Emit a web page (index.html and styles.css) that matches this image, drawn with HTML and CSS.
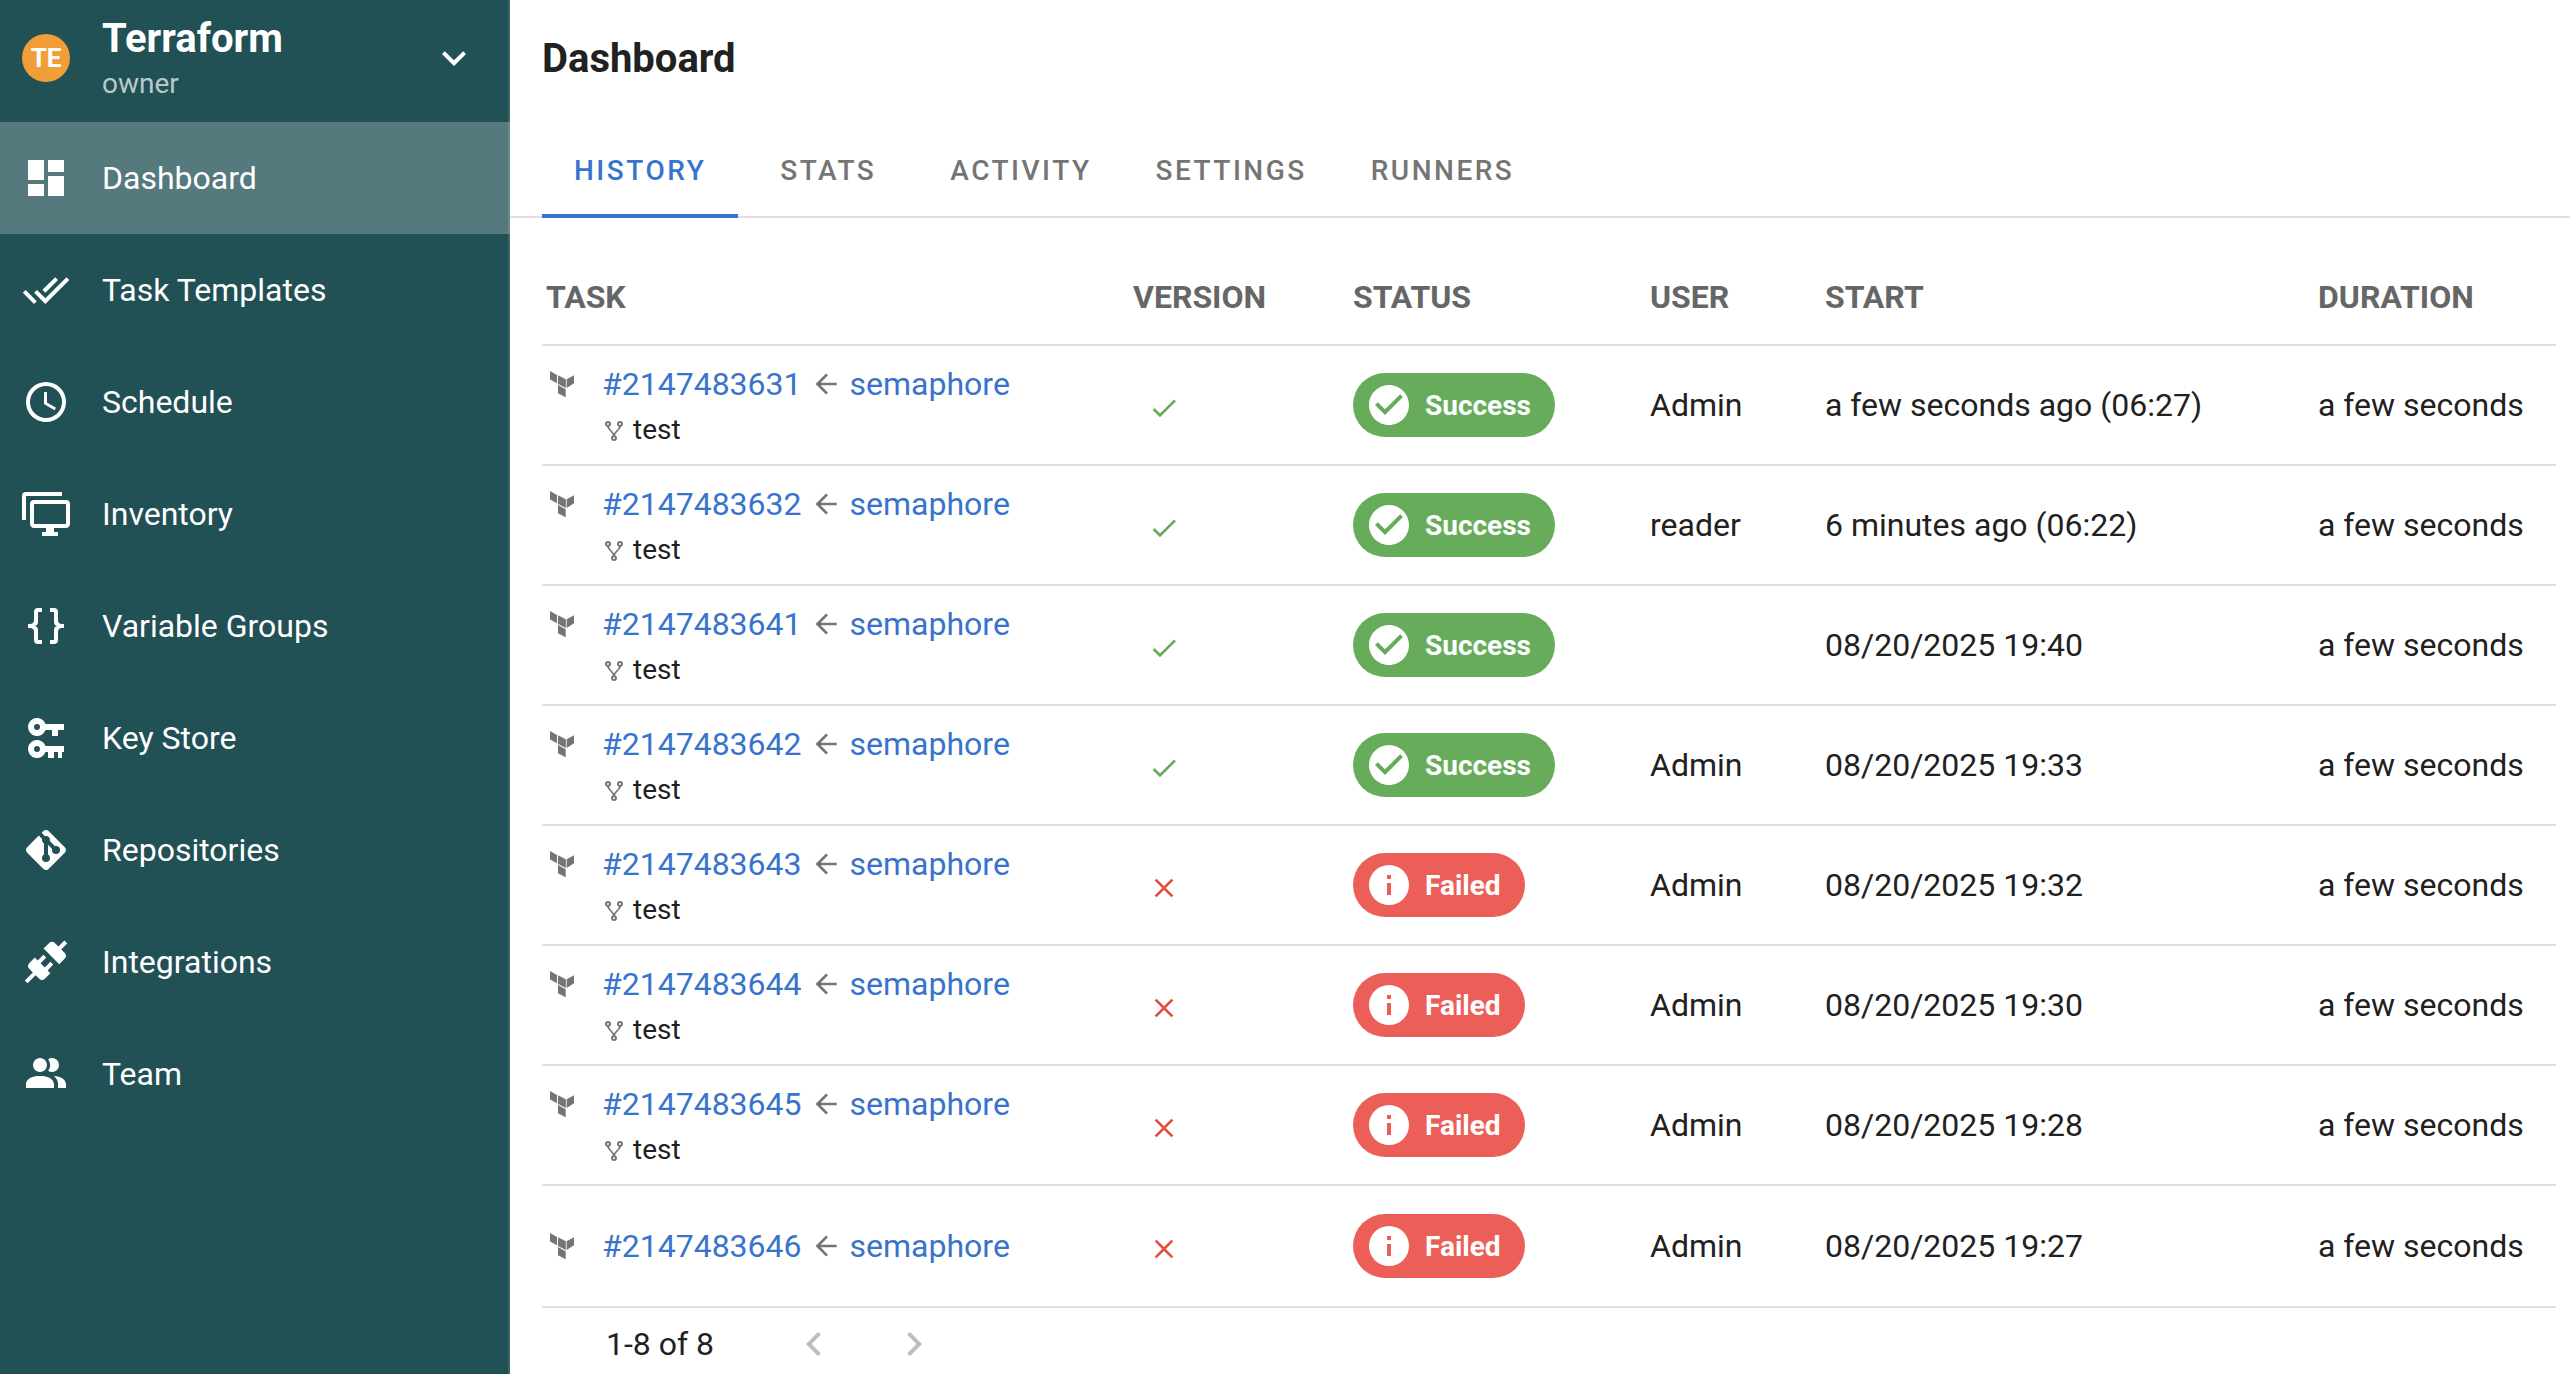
FILE: index.html
```html
<!DOCTYPE html>
<html lang="en">
<head>
<meta charset="utf-8">
<title>Dashboard</title>
<link rel="stylesheet" href="styles.css">
</head>
<body>
<svg class="sprite" width="0" height="0" aria-hidden="true">
  <symbol id="terraform" viewBox="0 0 96 96"><path d="M12,9L33,21V46L12,34.500ZM36,22L59.500,34V60L36,48ZM62,34L84,21.500V46L62,60ZM36,51L59,63.500V87.500L36,76Z"/></symbol>
  <symbol id="arrow-left" viewBox="0 0 24 24"><path d="M20,11V13H8L13.500,18.500L12.080,19.920L4.160,12L12.080,4.080L13.500,5.500L8,11H20Z"/></symbol>
  <symbol id="fork" viewBox="0 0 24 24"><path d="M6,2A3,3 0 0,1 9,5C9,6.280 8.190,7.380 7.060,7.810C7.150,8.270 7.390,8.830 8,9.630C9,10.920 11,12.830 12,14.170C13,12.830 15,10.920 16,9.630C16.610,8.830 16.850,8.270 16.940,7.810C15.810,7.380 15,6.280 15,5A3,3 0 0,1 18,2A3,3 0 0,1 21,5C21,6.320 20.140,7.450 18.950,7.850C18.870,8.370 18.640,9 18,9.830C17,11.170 15,13.080 14,14.380C13.390,15.170 13.150,15.730 13.060,16.190C14.190,16.620 15,17.720 15,19A3,3 0 0,1 12,22A3,3 0 0,1 9,19C9,17.720 9.810,16.620 10.940,16.190C10.850,15.730 10.610,15.170 10,14.380C9,13.080 7,11.170 6,9.830C5.360,9 5.130,8.370 5.050,7.850C3.860,7.450 3,6.320 3,5A3,3 0 0,1 6,2M6,4A1,1 0 0,0 5,5A1,1 0 0,0 6,6A1,1 0 0,0 7,5A1,1 0 0,0 6,4M18,4A1,1 0 0,0 17,5A1,1 0 0,0 18,6A1,1 0 0,0 19,5A1,1 0 0,0 18,4M12,18A1,1 0 0,0 11,19A1,1 0 0,0 12,20A1,1 0 0,0 13,19A1,1 0 0,0 12,18Z"/></symbol>
  <symbol id="check" viewBox="0 0 24 24"><path d="M21,7L9,19L3.500,13.500L4.910,12.090L9,16.170L19.590,5.590L21,7Z"/></symbol>
  <symbol id="close" viewBox="0 0 24 24"><path d="M19,6.410L17.590,5L12,10.590L6.410,5L5,6.410L10.590,12L5,17.590L6.410,19L12,13.410L17.590,19L19,17.590L13.410,12L19,6.410Z"/></symbol>
  <symbol id="check-circle" viewBox="0 0 24 24"><path d="M12,2C6.500,2 2,6.500 2,12S6.500,22 12,22 22,17.500 22,12 17.500,2 12,2M10,17L5,12L6.410,10.590L10,14.170L17.590,6.580L19,8L10,17Z"/></symbol>
  <symbol id="information" viewBox="0 0 24 24"><path d="M13,9H11V7H13M13,17H11V11H13M12,2A10,10 0 0,0 2,12A10,10 0 0,0 12,22A10,10 0 0,0 22,12A10,10 0 0,0 12,2Z"/></symbol>
</svg>
<div class="app">
  <aside class="sidebar">
    <button class="project">
      <span class="avatar">TE</span>
      <span class="project-text">
        <span class="project-name">Terraform</span>
        <span class="project-role">owner</span>
      </span>
      <svg class="icon" viewBox="0 0 24 24"><path d="M7.410,8.580L12,13.170L16.590,8.580L18,10L12,16L6,10L7.410,8.580Z"/></svg>
    </button>
    <nav class="nav">
      <a class="nav-item active"><svg class="icon" viewBox="0 0 24 24"><path d="M13,3V9H21V3M13,21H21V11H13M3,21H11V15H3M3,13H11V3H3V13Z"/></svg>Dashboard</a>
      <a class="nav-item"><svg class="icon" viewBox="0 0 24 24"><path d="M0.410,13.410L6,19L7.410,17.580L1.830,12M22.240,5.580L11.660,16.170L7.500,12L6.070,13.410L11.660,19L23.660,7M18,7L16.590,5.580L10.240,11.930L11.660,13.340L18,7Z"/></svg>Task Templates</a>
      <a class="nav-item"><svg class="icon" viewBox="0 0 24 24"><path d="M12,20A8,8 0 0,0 20,12A8,8 0 0,0 12,4A8,8 0 0,0 4,12A8,8 0 0,0 12,20M12,2A10,10 0 0,1 22,12A10,10 0 0,1 12,22C6.470,22 2,17.500 2,12A10,10 0 0,1 12,2M12.500,7V12.250L17,14.920L16.250,16.150L11,13V7H12.500Z"/></svg>Schedule</a>
      <a class="nav-item"><svg class="icon" viewBox="0 0 24 24"><path d="M22,17V7H6V17H22M22,5A2,2 0 0,1 24,7V17C24,18.110 23.100,19 22,19H16V21H18V23H10V21H12V19H6C4.890,19 4,18.110 4,17V7A2,2 0 0,1 6,5H22M2,3V15H0V3A2,2 0 0,1 2,1H20V3H2Z"/></svg>Inventory</a>
      <a class="nav-item"><svg class="icon" viewBox="0 0 24 24"><path d="M8,3A2,2 0 0,0 6,5V9A2,2 0 0,1 4,11H3V13H4A2,2 0 0,1 6,15V19A2,2 0 0,0 8,21H10V19H8V14A2,2 0 0,0 6,12A2,2 0 0,0 8,10V5H10V3M16,3A2,2 0 0,1 18,5V9A2,2 0 0,0 20,11H21V13H20A2,2 0 0,0 18,15V19A2,2 0 0,1 16,21H14V19H16V14A2,2 0 0,1 18,12A2,2 0 0,1 16,10V5H14V3H16Z"/></svg>Variable Groups</a>
      <a class="nav-item"><svg class="icon" viewBox="0 0 24 24"><path fill-rule="evenodd" d="M7.500,2C9.460,2 11.130,3.250 11.740,5H21V8H18V11H15V8H11.740A4.500,4.500 0 1,1 7.500,2M7.500,5A1.500,1.500 0 1,0 7.500,8A1.500,1.500 0 1,0 7.500,5M7.500,13C9.460,13 11.130,14.250 11.740,16H21V19H20V22H18V19H16V22H13V19H11.740A4.500,4.500 0 1,1 7.500,13M7.500,16A1.500,1.500 0 1,0 7.500,19A1.500,1.500 0 1,0 7.500,16Z"/></svg>Key Store</a>
      <a class="nav-item"><svg class="icon" viewBox="0 0 24 24"><path d="M2.600,10.590L8.380,4.800L10.070,6.500C9.830,7.350 10.220,8.280 11,8.730V14.270C10.400,14.610 10,15.260 10,16A2,2 0 0,0 12,18A2,2 0 0,0 14,16C14,15.260 13.600,14.610 13,14.270V9.410L15.070,11.500C15,11.650 15,11.820 15,12A2,2 0 0,0 17,14A2,2 0 0,0 19,12A2,2 0 0,0 17,10C16.820,10 16.650,10 16.500,10.070L13.930,7.500C14.190,6.570 13.710,5.550 12.780,5.160C12.350,5 11.900,4.960 11.500,5.070L9.800,3.380L10.590,2.600C11.370,1.810 12.630,1.810 13.410,2.600L21.400,10.590C22.190,11.370 22.190,12.630 21.400,13.410L13.410,21.400C12.630,22.190 11.370,22.190 10.590,21.400L2.600,13.410C1.810,12.630 1.810,11.370 2.600,10.590Z"/></svg>Repositories</a>
      <a class="nav-item"><svg class="icon" viewBox="0 0 24 24"><path d="M21.400,7.500C22.200,8.300 22.200,9.600 21.400,10.300L18.600,13.100L10.800,5.300L13.600,2.500C14.400,1.700 15.700,1.700 16.400,2.500L18.200,4.300L21.200,1.300L22.600,2.700L19.600,5.700L21.400,7.500M15.600,13.300L14.200,11.900L11.400,14.700L9.300,12.600L12.100,9.800L10.700,8.400L7.900,11.200L6.400,9.800L3.600,12.600C2.800,13.400 2.800,14.700 3.600,15.400L5.400,17.200L1.400,21.200L2.800,22.600L6.800,18.600L8.600,20.400C9.400,21.200 10.700,21.200 11.400,20.400L14.200,17.600L12.800,16.200L15.600,13.300Z"/></svg>Integrations</a>
      <a class="nav-item"><svg class="icon" viewBox="0 0 24 24"><path d="M16,17V19H2V17S2,13 9,13 16,17 16,17M12.500,7.500A3.500,3.500 0 1,0 9,11A3.500,3.500 0 0,0 12.500,7.500M15.940,13A5.320,5.320 0 0,1 18,17V19H22V17S22,13.370 15.940,13M15,4A3.390,3.390 0 0,0 13.070,4.590A5,5 0 0,1 13.070,10.410A3.390,3.390 0 0,0 15,11A3.500,3.500 0 0,0 15,4Z"/></svg>Team</a>
    </nav>
  </aside>

  <main class="main">
    <header class="toolbar"><h1 class="page-title">Dashboard</h1></header>
    <div class="tabs">
      <a class="tab selected">History</a>
      <a class="tab">Stats</a>
      <a class="tab">Activity</a>
      <a class="tab">Settings</a>
      <a class="tab">Runners</a>
    </div>

    <table class="history">
      <colgroup>
        <col class="col-task"><col class="col-version"><col class="col-status"><col class="col-user"><col class="col-start"><col>
      </colgroup>
      <thead>
        <tr><th>Task</th><th>Version</th><th>Status</th><th>User</th><th>Start</th><th>Duration</th></tr>
      </thead>
      <tbody>
        <tr>
          <td><div class="task"><svg class="app-icon"><use href="#terraform"/></svg><div class="task-info"><div class="task-line"><a class="link">#2147483631</a><svg class="arrow"><use href="#arrow-left"/></svg><a class="link">semaphore</a></div><div class="message"><svg class="fork"><use href="#fork"/></svg>test</div></div></div></td>
          <td><svg class="version ok"><use href="#check"/></svg></td>
          <td><span class="chip success"><svg class="icon"><use href="#check-circle"/></svg>Success</span></td>
          <td>Admin</td><td>a few seconds ago (06:27)</td><td>a few seconds</td>
        </tr>
        <tr>
          <td><div class="task"><svg class="app-icon"><use href="#terraform"/></svg><div class="task-info"><div class="task-line"><a class="link">#2147483632</a><svg class="arrow"><use href="#arrow-left"/></svg><a class="link">semaphore</a></div><div class="message"><svg class="fork"><use href="#fork"/></svg>test</div></div></div></td>
          <td><svg class="version ok"><use href="#check"/></svg></td>
          <td><span class="chip success"><svg class="icon"><use href="#check-circle"/></svg>Success</span></td>
          <td>reader</td><td>6 minutes ago (06:22)</td><td>a few seconds</td>
        </tr>
        <tr>
          <td><div class="task"><svg class="app-icon"><use href="#terraform"/></svg><div class="task-info"><div class="task-line"><a class="link">#2147483641</a><svg class="arrow"><use href="#arrow-left"/></svg><a class="link">semaphore</a></div><div class="message"><svg class="fork"><use href="#fork"/></svg>test</div></div></div></td>
          <td><svg class="version ok"><use href="#check"/></svg></td>
          <td><span class="chip success"><svg class="icon"><use href="#check-circle"/></svg>Success</span></td>
          <td></td><td>08/20/2025 19:40</td><td>a few seconds</td>
        </tr>
        <tr>
          <td><div class="task"><svg class="app-icon"><use href="#terraform"/></svg><div class="task-info"><div class="task-line"><a class="link">#2147483642</a><svg class="arrow"><use href="#arrow-left"/></svg><a class="link">semaphore</a></div><div class="message"><svg class="fork"><use href="#fork"/></svg>test</div></div></div></td>
          <td><svg class="version ok"><use href="#check"/></svg></td>
          <td><span class="chip success"><svg class="icon"><use href="#check-circle"/></svg>Success</span></td>
          <td>Admin</td><td>08/20/2025 19:33</td><td>a few seconds</td>
        </tr>
        <tr>
          <td><div class="task"><svg class="app-icon"><use href="#terraform"/></svg><div class="task-info"><div class="task-line"><a class="link">#2147483643</a><svg class="arrow"><use href="#arrow-left"/></svg><a class="link">semaphore</a></div><div class="message"><svg class="fork"><use href="#fork"/></svg>test</div></div></div></td>
          <td><svg class="version bad"><use href="#close"/></svg></td>
          <td><span class="chip failed"><svg class="icon"><use href="#information"/></svg>Failed</span></td>
          <td>Admin</td><td>08/20/2025 19:32</td><td>a few seconds</td>
        </tr>
        <tr>
          <td><div class="task"><svg class="app-icon"><use href="#terraform"/></svg><div class="task-info"><div class="task-line"><a class="link">#2147483644</a><svg class="arrow"><use href="#arrow-left"/></svg><a class="link">semaphore</a></div><div class="message"><svg class="fork"><use href="#fork"/></svg>test</div></div></div></td>
          <td><svg class="version bad"><use href="#close"/></svg></td>
          <td><span class="chip failed"><svg class="icon"><use href="#information"/></svg>Failed</span></td>
          <td>Admin</td><td>08/20/2025 19:30</td><td>a few seconds</td>
        </tr>
        <tr>
          <td><div class="task"><svg class="app-icon"><use href="#terraform"/></svg><div class="task-info"><div class="task-line"><a class="link">#2147483645</a><svg class="arrow"><use href="#arrow-left"/></svg><a class="link">semaphore</a></div><div class="message"><svg class="fork"><use href="#fork"/></svg>test</div></div></div></td>
          <td><svg class="version bad"><use href="#close"/></svg></td>
          <td><span class="chip failed"><svg class="icon"><use href="#information"/></svg>Failed</span></td>
          <td>Admin</td><td>08/20/2025 19:28</td><td>a few seconds</td>
        </tr>
        <tr>
          <td><div class="task"><svg class="app-icon"><use href="#terraform"/></svg><div class="task-info"><div class="task-line"><a class="link">#2147483646</a><svg class="arrow"><use href="#arrow-left"/></svg><a class="link">semaphore</a></div></div></div></td>
          <td><svg class="version bad"><use href="#close"/></svg></td>
          <td><span class="chip failed"><svg class="icon"><use href="#information"/></svg>Failed</span></td>
          <td>Admin</td><td>08/20/2025 19:27</td><td>a few seconds</td>
        </tr>
      </tbody>
    </table>

    <footer class="pagination">
      <span class="range">1-8 of 8</span>
      <svg class="icon" viewBox="0 0 24 24"><path d="M15.410,16.580L10.830,12L15.410,7.410L14,6L8,12L14,18L15.410,16.580Z"/></svg>
      <svg class="icon" viewBox="0 0 24 24"><path d="M8.590,16.580L13.170,12L8.590,7.410L10,6L16,12L10,18L8.590,16.580Z"/></svg>
    </footer>
  </main>
</div>
</body>
</html>
```
FILE: styles.css
```css
* {
  box-sizing: border-box;
}

body {
  margin: 0;
  background: #fff;
  color: #212121;
  font-family: Roboto, "Liberation Sans", sans-serif;
  font-size: 32px;
}

svg {
  display: block;
  flex: none;
  fill: currentColor;
}

.sprite {
  position: absolute;
}

.icon {
  width: 48px;
  height: 48px;
}

.app {
  display: flex;
  height: 1374px;
  overflow: hidden;
}

/* Sidebar */
.sidebar {
  flex: none;
  width: 510px;
  background: #215055;
  box-shadow: inset -2px 0 rgba(255, 255, 255, 0.12);
  color: #fff;
}

.project {
  display: flex;
  align-items: center;
  width: 100%;
  height: 122px;
  padding: 0 32px 6px 22px;
  border: 0;
  background: none;
  color: inherit;
  font: inherit;
  text-align: left;
}

.avatar {
  display: flex;
  align-items: center;
  justify-content: center;
  width: 48px;
  height: 48px;
  margin-right: 32px;
  border-radius: 50%;
  background: #f19d38;
  font-size: 26px;
  font-weight: 700;
}

.project-text {
  display: flex;
  flex: 1;
  flex-direction: column;
}

.project-name {
  font-size: 40px;
  font-weight: 700;
  line-height: 48px;
}

.project-role {
  margin-top: 4px;
  color: rgba(255, 255, 255, 0.7);
  font-size: 28px;
  line-height: 34px;
}

.nav-item {
  display: flex;
  align-items: center;
  gap: 32px;
  height: 112px;
  padding: 0 22px;
}

.nav-item.active {
  background: rgba(255, 255, 255, 0.24);
}

/* Page */
.main {
  flex: 1;
}

.toolbar {
  display: flex;
  align-items: center;
  height: 122px;
  padding: 0 32px 6px;
}

.page-title {
  margin: 0;
  font-size: 40px;
  font-weight: 700;
}

.tabs {
  display: flex;
  height: 96px;
  padding: 0 32px;
  border-bottom: 2px solid #e0e0e0;
}

.tab {
  display: flex;
  align-items: center;
  justify-content: center;
  min-width: 180px;
  height: 96px;
  padding: 0 32px;
  color: #757575;
  font-size: 28px;
  font-weight: 500;
  letter-spacing: 2.5px;
  text-transform: uppercase;
}

.tab.selected {
  box-shadow: inset 0 -4px #3874cb;
  color: #3874cb;
}

/* Task history */
.history {
  width: 2014px;
  margin: 32px 14px 0 32px;
  border-collapse: separate;
  border-spacing: 0;
  table-layout: fixed;
}

.col-task { width: 587px; }
.col-version { width: 220px; }
.col-status { width: 297px; }
.col-user { width: 175px; }
.col-start { width: 493px; }

.history th,
.history td {
  padding: 0 0 0 4px;
  border-bottom: 2px solid #e0e0e0;
  text-align: left;
  white-space: nowrap;
}

.history th {
  height: 96px;
  color: #666;
  font-weight: 700;
  text-transform: uppercase;
}

.history td {
  height: 120px;
}

.history tr:last-child td {
  height: 122px;
}

.task {
  display: flex;
  align-items: flex-start;
}

.app-icon {
  width: 32px;
  height: 32px;
  margin: 6px 24px 0 0;
}

.task-line {
  display: flex;
  align-items: center;
  height: 44px;
}

.link {
  color: #3874cb;
}

.app-icon,
.arrow,
.fork {
  color: #757575;
}

.arrow {
  width: 32px;
  height: 32px;
  margin: 0 8px;
}

.message {
  display: flex;
  align-items: center;
  gap: 7px;
  height: 42px;
  padding-top: 4px;
  font-size: 28px;
}

.fork {
  width: 24px;
  height: 24px;
  margin-top: 3px;
}

.version {
  width: 32px;
  height: 32px;
  margin: 6px 0 0 15px;
}

.version.ok { color: #67ac5b; }
.version.bad { color: #e15241; }

.chip {
  display: inline-flex;
  align-items: center;
  gap: 12px;
  height: 64px;
  padding: 0 24px 0 12px;
  border-radius: 32px;
  color: #fff;
  font-size: 28px;
  font-weight: 700;
  vertical-align: middle;
}

.chip.success { background: #67ac5b; }
.chip.failed { background: #ec5f59; }

.pagination {
  display: flex;
  align-items: center;
  height: 72px;
  padding-left: 96px;
}

.pagination .range {
  width: 184px;
}

.pagination .icon {
  margin-right: 52px;
  color: #bdbdbd;
}
```
